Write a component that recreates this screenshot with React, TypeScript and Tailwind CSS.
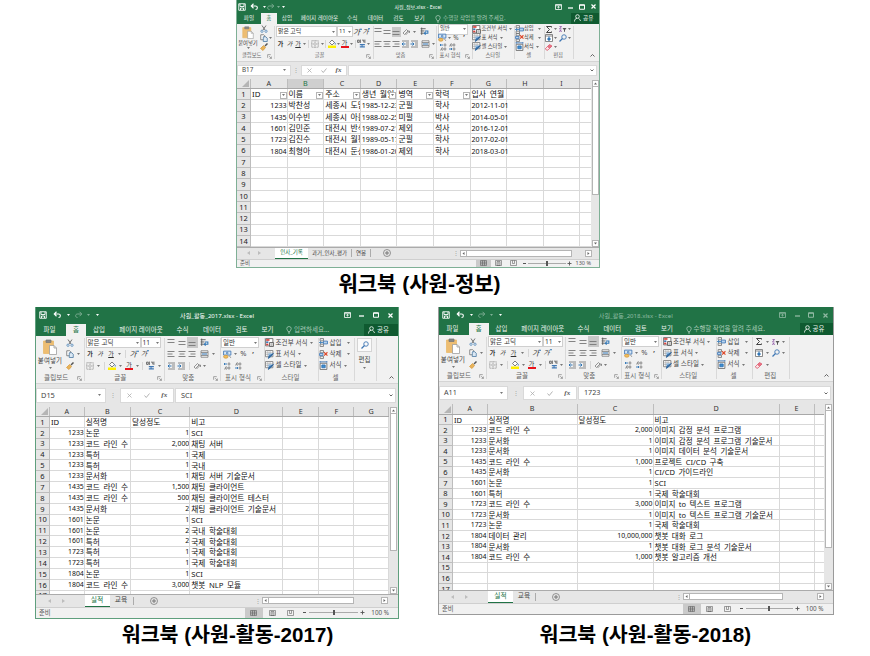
import React from 'react';
import clsx from 'clsx';

type Kids = { children?: React.ReactNode };

const KR = "font-['Noto_Sans','Noto_Sans_CJK_KR',sans-serif]";

/* ---------- small drawing helpers ---------- */

function Ico({ c = 'w-[9px] h-[9px]', v = '0 0 16 16', children }: Kids & { c?: string; v?: string }) {
  return (
    <svg className={clsx('block shrink-0', c)} viewBox={v} fill="none" stroke="currentColor" strokeWidth="1.5">
      {children}
    </svg>
  );
}

function Slot({ w, className, children }: Kids & { w: string; className?: string }) {
  return <div className={clsx('flex shrink-0 items-center justify-center', w, className)}>{children}</div>;
}

const Caret = ({ c = 'text-[#777]' }: { c?: string }) => (
  <Ico c={clsx('w-[3px] h-[2px]', c)} v="0 0 6 4"><path d="M0 0h6L3 4z" fill="currentColor" stroke="none" /></Ico>
);
const Save = () => <Ico c="w-[8px] h-[8px]"><path d="M1.5 1.5h13v13h-13zM4 2v5h8V2M5 14v-4h6v4" strokeWidth="1.8" /></Ico>;
const Undo = () => <Ico c="w-[9px] h-[8px]"><path d="M2 6h8c5 0 5 7 0 7M6 1.500L1.500 6 6 10.500" strokeWidth="2.200" /></Ico>;
const Redo = () => <Ico c="w-[9px] h-[8px] opacity-40"><path d="M14 6H6c-5 0-5 7 0 7M10 1.500L14.500 6 10 10.500" strokeWidth="2" /></Ico>;
const Bulb = () => <Ico c="w-[6px] h-[8px]" v="0 0 12 16"><path d="M4 11C4 9 1.500 8 1.500 5.500a4.500 4.500 0 019 0C10.500 8 8 9 8 11zM4 13.500h4M5 15.500h2" /></Ico>;
const Person = () => <Ico c="w-[7px] h-[8px]" v="0 0 14 16"><circle cx="7" cy="5" r="3.600" strokeWidth="1.800" /><path d="M1 15c0-4 2-6 5-6.500M9 9c2 1 3 2 4 5" strokeWidth="1.800" /></Ico>;
const Scissors = () => (
  <Ico c="w-[8px] h-[8px]"><path d="M4 1l6 9M12 1L6 10" stroke="#666" strokeWidth="1.800" /><circle cx="4" cy="12.500" r="2.300" stroke="#4a83b8" /><circle cx="12" cy="12.500" r="2.300" stroke="#4a83b8" /></Ico>
);
const Copy = () => (
  <Ico c="w-[8px] h-[8px]"><path d="M1.500 1.500h6l2 2v8h-8z" fill="#fff" stroke="#666" /><path d="M6.500 5.500h5l3 3v6.500h-8z" fill="#dbe8f4" stroke="#41719c" /></Ico>
);
const Brush = () => (
  <Ico c="w-[8px] h-[8px]"><path d="M15 1L10 6" stroke="#555" strokeWidth="3" /><path d="M7 5l4 4-5 6-5-4z" fill="#e8b35b" stroke="#d79b3c" /></Ico>
);
const Paste = ({ c }: { c: string }) => (
  <Ico c={c} v="0 0 28 32">
    <path d="M1 4h20v25H1z" fill="#edbd72" stroke="#e8b867" />
    <path d="M6 2h10v5H6z" fill="#888" stroke="#777" />
    <path d="M13 13h9l5 5v13H13z" fill="#fff" stroke="#999" />
    <path d="M22 13v5h5" stroke="#999" />
  </Ico>
);
const Borders = () => (
  <Ico c="w-[8px] h-[8px]"><path d="M1.500 1.500h13v13h-13zM8 1v14M1 8h14" stroke="#888" strokeDasharray="2 1" strokeWidth="1.400" /></Ico>
);
const Bucket = () => (
  <Ico c="w-[8px] h-[9px]" v="0 0 16 18"><path d="M3 7l5-5 5 5-5 5z" fill="#fff" stroke="#555" /><path d="M13 7c2 2 2 3 1.500 4" stroke="#3f77b4" strokeWidth="2" /><path d="M0 13h16v5H0z" fill="#fff000" stroke="none" /></Ico>
);
const FontColor = () => (
  <div className="flex w-[8px] flex-col items-center">
    <span className="text-[6px] leading-[6px] text-[#333]">가</span>
    <div className="h-[2px] w-full bg-[#e8141c]" />
  </div>
);
const Phonetic = () => (
  <Ico c="w-[9px] h-[9px]"><path d="M1 2h3v4H1zM6 1v6M9 2h3v4M14 1v6" stroke="#555" /><path d="M5 10h9M5 14h9M9 9v6" stroke="#3f77b4" strokeWidth="1.800" /></Ico>
);
const Lines = ({ d = 'M1 7h14M1 13h14' }: { d?: string }) => (
  <Ico c="w-[8px] h-[8px]"><path d={d} stroke="#777" strokeWidth="1.800" /></Ico>
);
const L_TOP = 'M1 1h14M1 7h14';
const L_MID = 'M1 5h14M1 11h14';
const L_LEFT = 'M1 3h14M1 8h10M1 13h14';
const L_CEN = 'M1 3h14M3 8h10M1 13h14';
const L_RIGHT = 'M1 3h14M5 8h10M1 13h14';
const Indent = ({ out = false }: { out?: boolean }) => (
  <Ico c="w-[9px] h-[8px]"><path d="M1 2h14M9 6h6M9 10h6M1 14h14" stroke="#666" />
    <path d={out ? 'M8 8H1M4 5L1 8l3 3' : 'M0 8h7M4 5l3 3-3 3'} stroke="#2f75b5" strokeWidth="2" /></Ico>
);
const Angle = () => <Ico c="w-[9px] h-[8px]"><path d="M1 10l7-7 3 3-7 7zM6 14l8-8M14 6v4M14 6h-4" stroke="#777" /></Ico>;
const Wrap = () => <Ico c="w-[9px] h-[9px]"><path d="M1 3h9M1 7h7M1 11h6M3 1v13" stroke="#555" /><path d="M9 7h5v4H8M10 8.500L7.500 11l2.500 2.500" stroke="#2f75b5" strokeWidth="1.800" /></Ico>;
const Merge = () => <Ico c="w-[9px] h-[8px]"><path d="M1 1.500h14v13H1zM1 5h14M1 11h14" stroke="#777" /><path d="M3 8h10" stroke="#2f75b5" strokeWidth="2" /></Ico>;
const Money = () => (
  <Ico c="w-[9px] h-[9px]"><path d="M1 2h13v7H1z" fill="#d6e6f5" stroke="#3f77b4" /><circle cx="7.500" cy="5.500" r="1.500" stroke="#3f77b4" /><ellipse cx="5" cy="12" rx="4" ry="2.500" fill="#f0c064" stroke="#d79b3c" /><path d="M11 10l3 4" stroke="#888" /></Ico>
);
const Decimal = ({ up = false }: { up?: boolean }) => (
  <Ico c="w-[8px] h-[8px]">
    <ellipse cx="12" cy="4" rx="1.800" ry="2.600" stroke="#666" strokeWidth="1.300" />
    <ellipse cx="12" cy="12" rx="1.800" ry="2.600" stroke="#666" strokeWidth="1.300" />
    <ellipse cx="6.500" cy={up ? 12 : 4} rx="1.800" ry="2.600" stroke="#666" strokeWidth="1.300" />
    <path d={up ? 'M8 4H2M4 2L2 4l2 2' : 'M2 12h6M6 10l2 2-2 2'} stroke="#2f75b5" strokeWidth="1.800" />
    <path d={up ? 'M2 14h1.500' : 'M2 6h1.500'} stroke="#666" />
  </Ico>
);
const Cond = () => (
  <Ico c="w-[9px] h-[9px]"><path d="M1 1h13v13H1z" fill="#fff" stroke="#666" /><path d="M2 2h6v3H2z" fill="#d8413b" stroke="none" /><path d="M2 6h4v3H2z" fill="#3f77b4" stroke="none" /><path d="M2 10h4v3H2z" fill="#d8413b" stroke="none" /><path d="M8 8h7v7H8z" fill="#fff" stroke="#555" /><path d="M9.500 10.500h4M9.500 12.700h4" stroke="#555" strokeWidth="1" /></Ico>
);
const TableFmt = () => (
  <Ico c="w-[9px] h-[9px]"><path d="M1 1h13v11H1z" fill="#fff" stroke="#777" /><path d="M2 5h12M2 8h12M5 1v11M9 1v11" stroke="#999" strokeWidth="1" /><path d="M6 6h7v5H6z" fill="#8db8e0" stroke="none" /><path d="M15 6l-5 6-4 3 1-4z" fill="#2f75b5" stroke="#2f6399" /></Ico>
);
const InsertI = () => (
  <Ico c="w-[9px] h-[9px]"><path d="M2 1h6v4H2zM2 11h6v4H2z" stroke="#777" /><path d="M8 5.500h7v5H8z" fill="#b9d4ee" stroke="#3f77b4" /><path d="M7 8H1M3.500 5.500L1 8l2.500 2.500" stroke="#2f75b5" /></Ico>
);
const DeleteI = () => (
  <Ico c="w-[9px] h-[9px]"><path d="M2 1h6v4H2zM2 11h6v4H2z" stroke="#777" /><path d="M1 6h6v4H1z" fill="#b9d4ee" stroke="#3f77b4" /><path d="M9 4l6 6M15 4l-6 6" stroke="#dd4a2c" strokeWidth="2" /></Ico>
);
const FormatI = () => (
  <Ico c="w-[9px] h-[9px]"><path d="M2 4h12v11H2z" fill="#fff" stroke="#666" /><path d="M5 7h6v5H5z" fill="#3f8fd2" stroke="#2f6fae" /><path d="M2 1.500h12M2 0v3M14 0v3" stroke="#3f77b4" /></Ico>
);
const Sigma = () => <Ico c="w-[8px] h-[9px]"><path d="M13 4V2H3l6 6-6 6h10v-2" stroke="#444" strokeWidth="2" /></Ico>;
const Sort = () => <Ico c="w-[8px] h-[8px]"><path d="M1 3h4L1 8h4M1 14l2-4 2 4" stroke="#8a4fa3" strokeWidth="1.600" /><path d="M7 6h8l-3 4v4l-2-1v-3z" fill="#555" stroke="none" /></Ico>;
const FillI = () => <Ico c="w-[8px] h-[8px]"><path d="M1 1h14v14H1zM1 4h14" fill="#fff" stroke="#666" /><path d="M8 5v7M5 9l3 3.500L11 9" stroke="#2f75b5" strokeWidth="2.400" /></Ico>;
const Find = ({ c = 'w-[8px] h-[8px]' }: { c?: string }) => <Ico c={c}><circle cx="10" cy="6" r="4.500" stroke="#3f77b4" strokeWidth="1.800" /><path d="M7 9l-6 6" stroke="#3f77b4" strokeWidth="2.400" /></Ico>;
const Eraser = () => <Ico c="w-[8px] h-[8px]"><path d="M1 11l8-8 5 3-8 8H3z" fill="#ea7183" stroke="#d9566b" /><path d="M1 11l4-4 4 4-3 3H3z" fill="#fbe3e6" stroke="#d9566b" strokeWidth="1" /></Ico>;
const Launcher = () => <Ico c="w-[5px] h-[5px]" v="0 0 8 8"><path d="M1 6V1h5M3.500 3.500L7 7M7 4v3H4" stroke="#777" strokeWidth="1" /></Ico>;
const Rule = ({ c }: { c: string }) => <div className={clsx('w-px shrink-0 bg-[#d6d6d6]', c)} />;

function Glyph({ k }: { k: 'plain' | 'it' | 'un' | 'big' | 'small' }) {
  return (
    <div className="flex items-start">
      <span
        className={clsx(
          'block leading-[8px] text-[#333]',
          k === 'plain' && 'font-bold',
          (k === 'it' || k === 'big' || k === 'small') && 'italic',
          k === 'un' && 'underline',
          k === 'big' ? 'text-[7.500px]' : k === 'small' ? 'text-[6.500px]' : 'text-[6px]',
        )}
      >
        가
      </span>
      {k === 'big' && <Ico c="w-[2px] h-[2px] text-[#2f75b5]" v="0 0 4 4"><path d="M0 4l2-4 2 4z" fill="currentColor" stroke="none" /></Ico>}
      {k === 'small' && <Ico c="w-[2px] h-[2px] text-[#2f75b5]" v="0 0 4 4"><path d="M0 0l2 4 2-4z" fill="currentColor" stroke="none" /></Ico>}
    </div>
  );
}

/* ---------- ribbon ---------- */

function Group({ w, label, launcher, labelH, children }: Kids & { w: string; label: string; launcher?: boolean; labelH: string }) {
  return (
    <div className={clsx('flex h-full shrink-0 flex-col', w)}>
      <div className="flex min-h-0 flex-1">
        <div className="min-w-0 flex-1">{children}</div>
      </div>
      <div className={clsx('flex items-center', labelH)}>
        <span className="flex-1 text-center whitespace-nowrap text-[#666]">{label}</span>
        {launcher && <div className="w-[7px]"><Launcher /></div>}
      </div>
    </div>
  );
}

const Sep = () => <div className="my-[2px] -mr-px w-px shrink-0 bg-[#d9d9d9]" />;

function Combo({ w, children }: Kids & { w: string }) {
  return (
    <div className={clsx('flex h-[11px] shrink-0 items-center justify-between border border-[#cfcfcf] bg-white px-[1px] text-[#333]', w)}>
      <span className="whitespace-nowrap">{children}</span>
      <Caret />
    </div>
  );
}

function IconLabel({ h, iw, tw, icon, children }: Kids & { h: string; iw: string; tw?: string; icon: React.ReactNode }) {
  return (
    <div className={clsx('flex items-center', h)}>
      <Slot w={iw}>{icon}</Slot>
      <span className={clsx('whitespace-nowrap text-[#444]', tw)}>{children}</span>
      <div className="ml-[2px]"><Caret /></div>
    </div>
  );
}

type RibbonW = { h: string; clip: string; font: string; align: string; num: string; styles: string; cells: string; combo: string };

function TallRibbon({ w, editing }: { w: RibbonW; editing: 'button' | 'icons' }) {
  const row = 'flex h-[11.300px] items-center';
  return (
    <div className={clsx('flex bg-[#f1f1f1] text-[6.500px] leading-none tracking-[0.100px]', w.h)}>
      <Group w={w.clip} label="클립보드" launcher labelH="h-[10px]">
        <div className="flex pt-[1.300px]">
          <div className="flex w-[28px] flex-col items-center pt-[2px]">
            <Paste c="w-[14px] h-[16px]" />
            <span className="mt-[3px] whitespace-nowrap text-[#444]">붙여넣기</span>
            <div className="mt-[2px]"><Caret /></div>
          </div>
          <div>
            <div className={row}><Slot w="w-[11px]"><Scissors /></Slot></div>
            <div className={row}><Slot w="w-[11px]"><Copy /></Slot><Slot w="w-[7px]"><Caret /></Slot></div>
            <div className={row}><Slot w="w-[11px]"><Brush /></Slot></div>
          </div>
        </div>
      </Group>
      <Sep />
      <Group w={w.font} label="글꼴" launcher labelH="h-[10px]">
        <div className="pt-[1.300px] pl-[2px]">
          <div className={row}><Combo w="w-[55px]">맑은 고딕</Combo><Combo w="w-[20px]">11</Combo></div>
          <div className={row}>
            <Slot w="w-[9px]"><Glyph k="plain" /></Slot><Slot w="w-[11px]"><Glyph k="it" /></Slot><Slot w="w-[11px]"><Glyph k="un" /></Slot>
            <Slot w="w-[6px]"><Caret /></Slot><Slot w="w-[6px]"><Rule c="h-[8px]" /></Slot>
            <Slot w="w-[11px]"><Glyph k="big" /></Slot><Slot w="w-[11px]"><Glyph k="small" /></Slot>
          </div>
          <div className={row}>
            <Slot w="w-[9px]"><Borders /></Slot><Slot w="w-[8px]"><Caret /></Slot><Slot w="w-[4px]"><Rule c="h-[8px]" /></Slot>
            <Slot w="w-[11px]"><Bucket /></Slot><Slot w="w-[6px]"><Caret /></Slot>
            <Slot w="w-[11px]"><FontColor /></Slot><Slot w="w-[6px]"><Caret /></Slot><Slot w="w-[4px]"><Rule c="h-[8px]" /></Slot>
            <Slot w="w-[12px]"><Phonetic /></Slot><Slot w="w-[5px]"><Caret /></Slot>
          </div>
        </div>
      </Group>
      <Sep />
      <Group w={w.align} label="맞춤" launcher labelH="h-[10px]">
        <div className="pt-[1.300px] pl-[2px]">
          <div className={row}>
            <Slot w="w-[10.500px]"><Lines d={L_TOP} /></Slot><Slot w="w-[10.500px]"><Lines d={L_MID} /></Slot>
            <Slot w="w-[10.500px]" className="h-[11px] bg-[#c8c8c8]"><Lines /></Slot><Slot w="w-[13px]"><Wrap /></Slot>
          </div>
          <div className={row}>
            <Slot w="w-[10.500px]"><Lines d={L_LEFT} /></Slot><Slot w="w-[10.500px]"><Lines d={L_CEN} /></Slot>
            <Slot w="w-[10.500px]"><Lines d={L_RIGHT} /></Slot><Slot w="w-[13px]"><Merge /></Slot><Slot w="w-[5px]"><Caret /></Slot>
          </div>
          <div className={row}>
            <Slot w="w-[10.500px]"><Indent out /></Slot><Slot w="w-[10.500px]"><Indent /></Slot><Slot w="w-[5px]"><Rule c="h-[8px]" /></Slot>
            <Slot w="w-[10px]"><Angle /></Slot><Slot w="w-[5px]"><Caret /></Slot>
          </div>
        </div>
      </Group>
      <Sep />
      <Group w={w.num} label="표시 형식" launcher labelH="h-[10px]">
        <div className="pt-[1.300px] pl-[1.500px]">
          <div className={row}><Combo w={w.combo}>일반</Combo></div>
          <div className={row}>
            <Slot w="w-[12px]"><Money /></Slot><Slot w="w-[5px]"><Caret /></Slot>
            <Slot w="w-[11px]"><span className="text-[7.500px] text-[#555]">%</span></Slot><Slot w="w-[8px]"><b className="text-[7px] text-[#444]">’</b></Slot>
          </div>
          <div className={row}><Slot w="w-[11px]"><Decimal up /></Slot><Slot w="w-[12px]"><Decimal /></Slot></div>
        </div>
      </Group>
      <Sep />
      <Group w={w.styles} label="스타일" labelH="h-[10px]">
        <div className="pt-[1.300px]">
          <IconLabel h="h-[11.300px]" iw="w-[12px]" icon={<Cond />}>조건부 서식</IconLabel>
          <IconLabel h="h-[11.300px]" iw="w-[12px]" icon={<TableFmt />}>표 서식</IconLabel>
          <IconLabel h="h-[11.300px]" iw="w-[12px]" icon={<TableFmt />}>셀 스타일</IconLabel>
        </div>
      </Group>
      <Sep />
      <Group w={w.cells} label="셀" labelH="h-[10px]">
        <div className="pt-[1.300px]">
          <IconLabel h="h-[11.300px]" iw="w-[12px]" tw="w-[15px]" icon={<InsertI />}>삽입</IconLabel>
          <IconLabel h="h-[11.300px]" iw="w-[12px]" tw="w-[15px]" icon={<DeleteI />}>삭제</IconLabel>
          <IconLabel h="h-[11.300px]" iw="w-[12px]" tw="w-[12px]" icon={<FormatI />}>서식</IconLabel>
        </div>
      </Group>
      <Sep />
      {editing === 'button' ? (
        <div className="flex w-[22px] shrink-0 flex-col items-center pt-[2px]">
          <div className="flex h-[14px] w-[15px] items-center justify-center border border-[#d4d4d4] bg-[#fafafa]"><Find /></div>
          <span className="mt-[5px] text-[#444]">편집</span>
          <div className="mt-[3px]"><Caret /></div>
        </div>
      ) : (
        <Group w="w-[37.500px]" label="편집" labelH="h-[10px]">
          <div className="pt-[1.300px] pl-[3px]">
            <div className={row}><Slot w="w-[9px]"><Sigma /></Slot><Slot w="w-[7px]"><Caret /></Slot><Slot w="w-[10px]"><Sort /></Slot><Slot w="w-[5px]"><Caret /></Slot></div>
            <div className={row}><Slot w="w-[9px]"><FillI /></Slot><Slot w="w-[7px]"><Caret /></Slot><Slot w="w-[10px]"><Find /></Slot><Slot w="w-[5px]"><Caret /></Slot></div>
            <div className={row}><Slot w="w-[9px]"><Eraser /></Slot><Slot w="w-[7px]"><Caret /></Slot></div>
          </div>
        </Group>
      )}
      <Sep />
      <Collapse />
    </div>
  );
}

const Collapse = () => (
  <div className="flex flex-1 items-end justify-end pr-[4px] pb-[4px]">
    <Ico c="w-[5px] h-[3px] text-[#555]" v="0 0 10 6"><path d="M1 5l4-4 4 4" strokeWidth="1.800" /></Ico>
  </div>
);

function ShortRibbon() {
  const row = 'flex h-[8.800px] items-center';
  const big = 'flex h-[12.200px] items-center';
  const lh = 'h-[9px]';
  return (
    <div className="flex h-[37px] bg-[#f1f1f1] text-[5.300px] leading-none">
      <Group w="w-[36.500px]" label="클립보드" launcher labelH={lh}>
        <div className="flex pt-[1.200px]">
          <div className="flex w-[22px] flex-col items-center pt-[1px]">
            <Paste c="w-[12px] h-[13px]" />
            <span className="mt-[2px] whitespace-nowrap text-[#444]">붙여넣기</span>
            <div className="mt-[1px]"><Caret /></div>
          </div>
          <div>
            <div className={row}><Slot w="w-[9px]"><Scissors /></Slot></div>
            <div className={row}><Slot w="w-[9px]"><Copy /></Slot><Slot w="w-[5px]"><Caret /></Slot></div>
            <div className={row}><Slot w="w-[9px]"><Brush /></Slot></div>
          </div>
        </div>
      </Group>
      <Sep />
      <Group w="w-[99px]" label="글꼴" launcher labelH={lh}>
        <div className="pt-[2px] pl-[2.500px]">
          <div className={clsx(big, 'text-[5.900px]')}>
            <Combo w="w-[61px]">맑은 고딕</Combo><Combo w="w-[16px]">11</Combo>
            <Slot w="w-[9px]"><Glyph k="big" /></Slot><Slot w="w-[9px]"><Glyph k="small" /></Slot>
          </div>
          <div className={big}>
            <Slot w="w-[9px]"><Glyph k="plain" /></Slot><Slot w="w-[9px]"><Glyph k="it" /></Slot><Slot w="w-[8px]"><Glyph k="un" /></Slot>
            <Slot w="w-[5px]"><Caret /></Slot><Slot w="w-[3px]"><Rule c="h-[8px]" /></Slot>
            <Slot w="w-[10px]"><Borders /></Slot><Slot w="w-[4px]"><Caret /></Slot><Slot w="w-[3px]"><Rule c="h-[8px]" /></Slot>
            <Slot w="w-[9px]"><Bucket /></Slot><Slot w="w-[4px]"><Caret /></Slot>
            <Slot w="w-[9px]"><FontColor /></Slot><Slot w="w-[4px]"><Caret /></Slot><Slot w="w-[4px]"><Rule c="h-[8px]" /></Slot>
            <Slot w="w-[9px]"><Phonetic /></Slot><Slot w="w-[4px]"><Caret /></Slot>
          </div>
        </div>
      </Group>
      <Sep />
      <Group w="w-[63px]" label="맞춤" launcher labelH={lh}>
        <div className="pt-[2px] pl-[1px]">
          <div className={big}>
            <Slot w="w-[9px]"><Lines d={L_TOP} /></Slot><Slot w="w-[9px]"><Lines d={L_MID} /></Slot>
            <Slot w="w-[9px]" className="h-[10px] bg-[#c8c8c8]"><Lines /></Slot>
            <Slot w="w-[11px]"><Angle /></Slot><Slot w="w-[5px]"><Caret /></Slot><Slot w="w-[16px]"><Wrap /></Slot>
          </div>
          <div className={big}>
            <Slot w="w-[9px]"><Lines d={L_LEFT} /></Slot><Slot w="w-[9px]"><Lines d={L_CEN} /></Slot><Slot w="w-[9px]"><Lines d={L_RIGHT} /></Slot>
            <Slot w="w-[9px]"><Indent out /></Slot><Slot w="w-[9px]"><Indent /></Slot><Slot w="w-[13px]"><Merge /></Slot><Slot w="w-[4px]"><Caret /></Slot>
          </div>
        </div>
      </Group>
      <Sep />
      <Group w="w-[36px]" label="표시 형식" launcher labelH={lh}>
        <div className="pt-[1.200px] pl-[2.500px]">
          <div className={row}><Combo w="w-[30px]">일반</Combo></div>
          <div className={row}>
            <Slot w="w-[9px]"><Money /></Slot><Slot w="w-[5px]"><Caret /></Slot>
            <Slot w="w-[8px]"><span className="text-[6.500px] text-[#555]">%</span></Slot><Slot w="w-[8px]"><b className="text-[7px] text-[#444]">’</b></Slot>
          </div>
          <div className={row}><Slot w="w-[9px]"><Decimal up /></Slot><Slot w="w-[9px]"><Decimal /></Slot></div>
        </div>
      </Group>
      <Sep />
      <Group w="w-[42.500px]" label="스타일" labelH={lh}>
        <div className="pt-[1.200px]">
          <IconLabel h="h-[8.800px]" iw="w-[10px]" icon={<Cond />}>조건부 서식</IconLabel>
          <IconLabel h="h-[8.800px]" iw="w-[10px]" icon={<TableFmt />}>표 서식</IconLabel>
          <IconLabel h="h-[8.800px]" iw="w-[10px]" icon={<TableFmt />}>셀 스타일</IconLabel>
        </div>
      </Group>
      <Sep />
      <Group w="w-[29.500px]" label="셀" labelH={lh}>
        <div className="pt-[1.200px]">
          <IconLabel h="h-[8.800px]" iw="w-[10px]" tw="w-[12px]" icon={<InsertI />}>삽입</IconLabel>
          <IconLabel h="h-[8.800px]" iw="w-[10px]" tw="w-[12px]" icon={<DeleteI />}>삭제</IconLabel>
          <IconLabel h="h-[8.800px]" iw="w-[10px]" tw="w-[10px]" icon={<FormatI />}>서식</IconLabel>
        </div>
      </Group>
      <Sep />
      <Group w="w-[29px]" label="편집" labelH={lh}>
        <div className="pt-[1.200px] pl-[1px]">
          <div className={row}><Slot w="w-[8px]"><Sigma /></Slot><Slot w="w-[6px]"><Caret /></Slot><Slot w="w-[8px]"><Sort /></Slot><Slot w="w-[5px]"><Caret /></Slot></div>
          <div className={row}><Slot w="w-[8px]"><FillI /></Slot><Slot w="w-[6px]"><Caret /></Slot><Slot w="w-[8px]"><Find /></Slot><Slot w="w-[5px]"><Caret /></Slot></div>
          <div className={row}><Slot w="w-[8px]"><Eraser /></Slot><Slot w="w-[5px]"><Caret /></Slot></div>
        </div>
      </Group>
      <Sep />
      <Collapse />
    </div>
  );
}

/* ---------- window frame parts ---------- */

type TitleCfg = { h: string; qat: string[]; title: string; titleCls: string; btn: string; faded?: boolean };

function TitleBar({ t }: { t: TitleCfg }) {
  return (
    <div className={clsx('flex shrink-0 items-center justify-between bg-[#217346] text-white', t.h)}>
      <div className="flex flex-1 items-center">
        <Slot w={t.qat[0]}><Save /></Slot>
        <Slot w={t.qat[1]}><Undo /></Slot>
        <Slot w={t.qat[2]}><Caret c="text-white" /></Slot>
        <Slot w={t.qat[3]}><Redo /></Slot>
        <Slot w={t.qat[4]}><Caret c="text-[#7fb096]" /></Slot>
        <Slot w={t.qat[5]}><Caret c="text-white" /></Slot>
      </div>
      <span className={clsx('leading-none whitespace-nowrap', t.titleCls)}>{t.title}</span>
      <div className={clsx('flex flex-1 items-center justify-end', t.faded && 'opacity-50')}>
        <Slot w={t.btn}><Ico c="w-[7px] h-[6px]" v="0 0 14 12"><path d="M1 1h12v10H1zM1 3.500h12M7 9V5M5 7l2-2 2 2" strokeWidth="1.600" /></Ico></Slot>
        <Slot w={t.btn}><Ico c="w-[5px] h-[6px]" v="0 0 10 12"><path d="M0 8h10" strokeWidth="2.600" /></Ico></Slot>
        <Slot w={t.btn}><Ico c="w-[6px] h-[6px]" v="0 0 12 12"><path d="M1 1.500h10v9H1zM1 2.500h10" strokeWidth="2" /></Ico></Slot>
        <Slot w={t.btn}><Ico c="w-[5px] h-[5px]" v="0 0 10 10"><path d="M1 1l8 8M9 1L1 9" strokeWidth="2.400" /></Ico></Slot>
      </div>
    </div>
  );
}

const TAB_NAMES = ['파일', '홈', '삽입', '페이지 레이아웃', '수식', '데이터', '검토', '보기'];

function RibbonTabs({ h, widths, text, tell, share }: { h: string; widths: string[]; text: string; tell: string; share: string }) {
  return (
    <div className={clsx('flex shrink-0 items-stretch bg-[#217346] leading-none text-[#e9f2ec]', h, text)}>
      {TAB_NAMES.map((n, i) => (
        <div key={n} className={clsx('flex shrink-0 items-center justify-center pt-px whitespace-nowrap', widths[i], i === 1 && 'bg-[#f1f1f1] text-[#217346]')}>{n}</div>
      ))}
      <div className="flex flex-1 items-center gap-[2px] pt-px pl-[5px] text-[#a9cbb8]">
        <Bulb />
        <span className="whitespace-nowrap">{tell}</span>
      </div>
      <div className={clsx('flex shrink-0 items-center gap-[2px] bg-[#0f5a30]', share)}>
        <Person /><span className="pt-px whitespace-nowrap">공유</span>
      </div>
    </div>
  );
}

function FormulaBar({ h, bh, cell, value, name, dots, mid, text }: { h: string; bh: string; cell: string; value: string; name: string; dots: string; mid: string; text: string }) {
  return (
    <div className={clsx('flex shrink-0 items-center border-t border-[#d4d4d4] bg-[#e6e6e6] pr-[2px] leading-none text-[#444]', h, text)}>
      <div className={clsx('flex shrink-0 items-center justify-between border border-[#d9d9d9] bg-white pr-[4px] pl-[4px]', bh, name)}>
        <span>{cell}</span><Caret />
      </div>
      <Slot w={dots}><span className="text-[6px] text-[#999]">⋮</span></Slot>
      <div className={clsx('flex shrink-0 items-center justify-around border border-[#d9d9d9] bg-white', bh, mid)}>
        <Ico c="w-[5px] h-[5px] text-[#aaa]" v="0 0 10 10"><path d="M1 1l8 8M9 1L1 9" /></Ico>
        <Ico c="w-[6px] h-[5px] text-[#aaa]" v="0 0 12 10"><path d="M1 5l3.500 4L11 1" strokeWidth="1.800" /></Ico>
        <i className="font-['Liberation_Serif',serif] text-[7px] font-bold text-[#555]">fx</i>
      </div>
      <div className={clsx('ml-px flex min-w-0 flex-1 items-center justify-between border border-[#d9d9d9] bg-white pr-[2px] pl-[5px]', bh)}>
        <span>{value}</span>
        <Ico c="w-[4px] h-[3px] text-[#555]" v="0 0 8 6"><path d="M1 1l3 3 3-3" strokeWidth="1.800" /></Ico>
      </div>
    </div>
  );
}

type Col = { n: string; w: string; num?: boolean; filter?: boolean; sel?: boolean; spill?: boolean };
type Sheet = {
  h: string;
  headH: string;
  rowH: string;
  head: string;
  cols: Col[];
  rows: string[][];
  count: number;
  numText: string;
  text: string;
  gutter: string;
  bar: string;
  thumb: string;
};

const ScrollBtn = ({ d, c = 'w-[7px] h-[7px]' }: { d: string; c?: string }) => (
  <div className={clsx('flex shrink-0 items-center justify-center border border-[#b5b5b5] bg-white', c)}>
    <Ico c="w-[3px] h-[3px] text-[#666]" v="0 0 6 6"><path d={d} fill="currentColor" stroke="none" /></Ico>
  </div>
);

function Cell({ c, v, first, numText }: { c: Col; v: string; first: boolean; numText: string }) {
  const numeric = /^[\d,-]+$/.test(v);
  return (
    <div
      className={clsx(
        'flex shrink-0 items-center border-r border-b border-[#d9d9d9] whitespace-nowrap',
        c.w,
        c.spill ? 'overflow-visible' : 'overflow-hidden',
        c.num && !first ? 'justify-end' : 'pl-px',
        numeric ? clsx('pt-px', numText) : 'pt-[2px]',
      )}
    >
      <span className={clsx(c.filter && first && 'min-w-0 flex-1')}>{v}</span>
      {c.filter && first && (
        <div className="z-10 flex h-[7px] w-[7px] shrink-0 items-center justify-center border border-[#b5b5b5] bg-white"><Caret /></div>
      )}
    </div>
  );
}

function Grid({ s }: { s: Sheet }) {
  return (
    <div className={clsx('flex shrink-0 overflow-hidden bg-white', s.h)}>
      <div className="flex min-w-0 flex-1 flex-col overflow-hidden">
        <div className={clsx('flex shrink-0 border-b border-[#a8a8a8] bg-[#e6e6e6] text-[7.200px] leading-none text-[#333]', s.headH)}>
          <div className={clsx('flex shrink-0 items-end justify-end border-r border-[#bdbdbd] p-[1px]', s.head)}>
            <Ico c="w-[7px] h-[7px] text-[#b5b5b5]" v="0 0 10 10"><path d="M10 0v10H0z" fill="currentColor" stroke="none" /></Ico>
          </div>
          {s.cols.map((c) => (
            <div key={c.n} className={clsx('flex shrink-0 items-center justify-center border-r border-[#bdbdbd]', c.w, c.sel && 'bg-[#cfcfcf] text-[#217346]')}>{c.n}</div>
          ))}
        </div>
        {Array.from({ length: s.count }, (_, r) => (
          <div key={r} className={clsx('flex shrink-0 leading-none text-[#111]', s.rowH, s.text)}>
            <div className={clsx('flex shrink-0 items-center justify-center border-r border-b border-[#bdbdbd] bg-[#e6e6e6] pt-px text-[7.500px] text-[#222]', s.head)}>{r + 1}</div>
            {s.cols.map((c, i) => <Cell key={c.n} c={c} v={s.rows[r]?.[i] ?? ''} first={r === 0} numText={s.numText} />)}
            <div className="flex-1 border-b border-[#d9d9d9]" />
          </div>
        ))}
      </div>
      <div className={clsx('flex shrink-0 flex-col items-center bg-[#e6e6e6]', s.gutter, s.bar)}>
        <ScrollBtn d="M3 1l3 4H0z" />
        <div className={clsx('w-[7px] shrink-0 border border-t-0 border-[#b5b5b5] bg-white', s.thumb)} />
        <div className="flex-1" />
        <ScrollBtn d="M3 5L0 1h6z" />
      </div>
    </div>
  );
}

type FootCfg = {
  h: string; nav: string; lead: string; active: string; activeW: string; others: string[]; otherW: string[]; plus: string;
  scroll: string; thumb: string; text: string;
  sh: string; zoom: string; viewW: string; slider: string; pct: string; tail: string;
};

function Footer({ f }: { f: FootCfg }) {
  return (
    <>
      <div className={clsx('flex shrink-0 items-center border-t border-[#ababab] bg-[#e6e6e6] leading-none text-[#444]', f.h, f.text)}>
        <div className={clsx('flex shrink-0 items-center text-[#bdbdbd]', f.lead)}>
          <Ico c="w-[3px] h-[4px]" v="0 0 6 8"><path d="M6 0v8L0 4z" fill="currentColor" stroke="none" /></Ico>
          <div className={f.nav} />
          <Ico c="w-[3px] h-[4px]" v="0 0 6 8"><path d="M0 0v8l6-4z" fill="currentColor" stroke="none" /></Ico>
        </div>
        <div className={clsx('flex h-full shrink-0 items-center justify-center border-b-[1.500px] border-[#217346] bg-white whitespace-nowrap text-[#217346]', f.activeW)}>{f.active}</div>
        {f.others.map((o, i) => (
          <div key={o} className={clsx('flex h-[8px] shrink-0 items-center justify-center border-r border-[#ababab] whitespace-nowrap', f.otherW[i])}>{o}</div>
        ))}
        <Slot w={f.plus}><Ico c="w-[8px] h-[8px] text-[#777]"><circle cx="8" cy="8" r="7" /><path d="M8 4v8M4 8h8" strokeWidth="2" /></Ico></Slot>
        <div className="flex-1" />
        <Slot w="w-[8px]"><span className="text-[6px] text-[#999]">⋮</span></Slot>
        <div className={clsx('flex h-[7px] shrink-0 items-center', f.scroll)}>
          <ScrollBtn d="M1 3l4-3v6z" />
          <div className={clsx('h-[7px] border border-l-0 border-[#b5b5b5] bg-white', f.thumb)} />
          <div className="flex-1" />
          <ScrollBtn d="M5 3L1 0v6z" />
        </div>
      </div>
      <div className={clsx('flex min-h-0 flex-1 items-center border-t border-[#cfcfcf] bg-[#f1f1f1] pl-[3px] leading-none text-[#555]', f.sh)}>
        <span className="flex-1">준비</span>
        <Slot w={f.viewW} className="h-full bg-[#cacaca]"><Ico c="w-[7px] h-[6px]" v="0 0 14 12"><path d="M1 1h12v10H1zM1 4.300h12M1 7.700h12M5 1v10M9 1v10" strokeWidth="1.100" /></Ico></Slot>
        <Slot w={f.viewW}><Ico c="w-[7px] h-[6px]" v="0 0 14 12"><path d="M1 1h12v10H1zM4 3h6v8H4zM5 5.500h4M5 8h4" strokeWidth="1.100" /></Ico></Slot>
        <Slot w={f.viewW}><Ico c="w-[7px] h-[6px]" v="0 0 14 12"><path d="M1 1h12v10H1zM5 1v6M9 1v6M5 7h4" strokeWidth="1.100" /></Ico></Slot>
        <Slot w={f.zoom}><div className="h-px w-[3px] bg-[#555]" /></Slot>
        <div className={clsx('flex shrink-0 items-center', f.slider)}>
          <div className="h-px flex-1 bg-[#aaa]" /><div className="h-[5px] w-[2px] bg-[#555]" /><div className="h-px flex-1 bg-[#aaa]" />
        </div>
        <Slot w={f.zoom}><Ico c="w-[5px] h-[5px]" v="0 0 10 10"><path d="M5 1v8M1 5h8" strokeWidth="1.800" /></Ico></Slot>
        <span className={clsx('shrink-0 text-right whitespace-nowrap', f.tail)}>{f.pct}</span>
      </div>
    </>
  );
}

const Caption = ({ c, children }: Kids & { c: string }) => (
  <figcaption className={clsx("text-center font-['Liberation_Sans','Noto_Sans_CJK_KR',sans-serif] leading-[30px] font-bold whitespace-nowrap text-black", c)}>{children}</figcaption>
);

/* ---------- workbook data ---------- */

const infoSheet: Sheet = {
  h: 'h-[168px]', headH: 'h-[10px]', rowH: 'h-[11.310px]', head: 'w-[14px]', count: 14, gutter: 'w-[8px]', bar: 'pt-[1px]', thumb: 'h-[108px]',
  numText: 'text-[7.100px]', text: 'text-[7.900px] [word-spacing:1.500px]',
  cols: [
    { n: 'A', w: 'w-[36.600px]', num: true, filter: true }, { n: 'B', w: 'w-[36.600px]', filter: true, sel: true },
    { n: 'C', w: 'w-[36.600px]', filter: true }, { n: 'D', w: 'w-[36.600px]', filter: true }, { n: 'E', w: 'w-[36.600px]', filter: true },
    { n: 'F', w: 'w-[36.600px]', filter: true }, { n: 'G', w: 'w-[36.600px]', spill: true }, { n: 'H', w: 'w-[36.600px]' }, { n: 'I', w: 'w-[36.600px]' },
  ],
  rows: [
    ['ID', '이름', '주소', '생년 월일', '병역', '학력', '입사 연월'],
    ['1233', '박찬성', '세종시 도담동', '1985-12-23', '군필', '학사', '2012-11-01'],
    ['1435', '이수빈', '세종시 아름동', '1988-02-25', '미필', '박사', '2014-05-01'],
    ['1601', '김민준', '대전시 반석동', '1989-07-21', '제외', '석사', '2016-12-01'],
    ['1723', '김진수', '대전시 월평동', '1989-05-17', '군필', '학사', '2017-02-01'],
    ['1804', '최형아', '대전시 둔산동', '1986-01-20', '제외', '학사', '2018-03-01'],
  ],
};

const sheet2017: Sheet = {
  h: 'h-[187px]', headH: 'h-[10.500px]', rowH: 'h-[10.870px]', head: 'w-[14px]', count: 17, gutter: 'w-[9px]', bar: '', thumb: 'h-[137px]',
  numText: 'text-[6.900px]', text: 'text-[7.700px] [word-spacing:1.500px]',
  cols: [
    { n: 'A', w: 'w-[34.800px]', num: true }, { n: 'B', w: 'w-[46.200px]' }, { n: 'C', w: 'w-[59.300px]', num: true },
    { n: 'D', w: 'w-[93px]' }, { n: 'E', w: 'w-[36px]' }, { n: 'F', w: 'w-[35px]' }, { n: 'G', w: 'w-[34.700px]' },
  ],
  rows: [
    ['ID', '실적명', '달성정도', '비고'],
    ['1233', '논문', '1', 'SCI'],
    ['1233', '코드 라인 수', '2,000', '채팅 서버'],
    ['1233', '특허', '1', '국제'],
    ['1233', '특허', '1', '국내'],
    ['1233', '문서화', '1', '채팅 서버 기술문서'],
    ['1435', '코드 라인 수', '1,500', '채팅 클라이언트'],
    ['1435', '코드 라인 수', '500', '채팅 클라이언트 테스터'],
    ['1435', '문서화', '2', '채팅 클라이언트 기술문서'],
    ['1601', '논문', '1', 'SCI'],
    ['1601', '논문', '2', '국내 학술대회'],
    ['1601', '특허', '2', '국제 학술대회'],
    ['1723', '특허', '1', '국제 학술대회'],
    ['1723', '특허', '1', '국제 학술대회'],
    ['1804', '논문', '1', 'SCI'],
    ['1804', '코드 라인 수', '3,000', '챗봇 NLP 모듈'],
  ],
};

const sheet2018: Sheet = {
  h: 'h-[185.500px]', headH: 'h-[10.500px]', rowH: 'h-[10.600px]', head: 'w-[14px]', count: 17, gutter: 'w-[9px]', bar: '', thumb: 'h-[137px]',
  numText: 'text-[6.900px]', text: 'text-[7.550px] [word-spacing:1.500px]',
  cols: [
    { n: 'A', w: 'w-[34.500px]', num: true }, { n: 'B', w: 'w-[90px]' }, { n: 'C', w: 'w-[76px]', num: true },
    { n: 'D', w: 'w-[126px]' }, { n: 'E', w: 'w-[35px]' },
  ],
  rows: [
    ['ID', '실적명', '달성정도', '비고'],
    ['1233', '코드 라인 수', '2,000', '이미지 감정 분석 프로그램'],
    ['1233', '문서화', '1', '이미지 감정 분석 프로그램 기술문서'],
    ['1233', '문서화', '1', '이미지 데이터 분석 기술문서'],
    ['1435', '코드 라인 수', '1,000', '프로젝트 CI/CD 구축'],
    ['1435', '문서화', '1', 'CI/CD 가이드라인'],
    ['1601', '논문', '1', 'SCI'],
    ['1601', '특허', '1', '국제 학술대회'],
    ['1723', '코드 라인 수', '3,000', '이미지 to 텍스트 프로그램'],
    ['1723', '문서화', '1', '이미지 to 텍스트 프로그램 기술문서'],
    ['1723', '논문', '1', '국제 학술대회'],
    ['1804', '데이터 관리', '10,000,000', '챗봇 대화 로그'],
    ['1804', '문서화', '1', '챗봇 대화 로그 분석 기술문서'],
    ['1804', '코드 라인 수', '1,000', '챗봇 알고리즘 개선'],
  ],
};

export default function App() {
  return (
    <main className={clsx('h-[656px] w-[870px] overflow-hidden bg-white', KR)}>
      <figure className="ml-[236px] h-[307px] w-[364px]">
        <div className="flex h-[268px] flex-col overflow-hidden border border-t-0 border-[#7fb096]">
          <TitleBar t={{ h: 'h-[13px]', qat: ['w-[10px]', 'w-[15px]', 'w-[4px]', 'w-[9px]', 'w-[6px]', 'w-[4px]'], title: '사원_정보.xlsx - Excel', titleCls: 'text-[5px] pt-[2px]', btn: 'w-[11.500px]' }} />
          <RibbonTabs h="h-[10.500px]" text="text-[5.600px]" tell="수행할 작업을 알려 주세요." share="w-[28px] pl-[3px]"
            widths={['w-[24px]', 'w-[15.500px]', 'w-[21px]', 'w-[44px]', 'w-[21.500px]', 'w-[25px]', 'w-[21px]', 'w-[21px]']} />
          <ShortRibbon />
          <FormulaBar h="h-[18.500px]" bh="h-[11px]" text="text-[6.300px]" cell="B17" value="" name="w-[54px]" dots="w-[10px]" mid="w-[46px]" />
          <Grid s={infoSheet} />
          <Footer f={{ h: 'h-[11.500px]', lead: 'w-[38px] pl-[10px]', nav: 'w-[8px]', active: '인사_기록', activeW: 'w-[33px]', others: ['과거_인사_평가', '연봉'], otherW: ['w-[44px]', 'w-[19px]'], plus: 'w-[31px]', scroll: 'w-[132px] mr-[7px]', thumb: 'w-[105px]', text: 'text-[5.500px]', sh: 'text-[5.500px]', viewW: 'w-[15px]', zoom: 'w-[7px]', slider: 'w-[38px]', pct: '130 %', tail: 'w-[18px] mr-[8px]' }} />
        </div>
        <Caption c="pl-[3px] pt-[1px] text-[21px]">워크북 (사원-정보)</Caption>
      </figure>

      <div className="flex pl-[35px]">
        <figure className="w-[364px]">
          <div className="flex h-[312px] flex-col overflow-hidden border border-t-0 border-[#5f9f7d]">
            <TitleBar t={{ h: 'h-[16.500px]', qat: ['w-[13px]', 'w-[17px]', 'w-[5px]', 'w-[14px]', 'w-[6px]', 'w-[12px]'], title: '사원_활동_2017.xlsx - Excel', titleCls: 'text-[6.100px] pt-[2px]', btn: 'w-[14.500px]' }} />
            <RibbonTabs h="h-[12.500px]" text="text-[6.500px]" tell="입력하세요..." share="w-[34px] pl-[4px]"
              widths={['w-[30px] pr-[3px]', 'w-[20px]', 'w-[26px]', 'w-[58px]', 'w-[25px]', 'w-[34px]', 'w-[25px]', 'w-[27px]']} />
            <TallRibbon editing="button" w={{ h: 'h-[47px]', clip: 'w-[47.500px]', font: 'w-[80.500px]', align: 'w-[55.500px]', num: 'w-[44px]', styles: 'w-[54px]', cells: 'w-[36px]', combo: 'w-[38px]' }} />
            <FormulaBar h="h-[23.500px]" bh="h-[15px]" text="text-[7.400px]" cell="D15" value="SCI" name="w-[70px]" dots="w-[14px]" mid="w-[54px]" />
            <Grid s={sheet2017} />
            <Footer f={{ h: 'h-[13px]', lead: 'w-[48.500px] pl-[12px]', nav: 'w-[11px]', active: '실적', activeW: 'w-[25px]', others: ['교육'], otherW: ['w-[24px]'], plus: 'w-[41px]', scroll: 'w-[126px] mr-[10px]', thumb: 'w-[85px]', text: 'text-[6.800px]', sh: 'text-[6.300px]', viewW: 'w-[18.500px]', zoom: 'w-[9px]', slider: 'w-[49px]', pct: '100 %', tail: 'w-[22px] mr-[9px]' }} />
          </div>
          <Caption c="pl-[21px] pt-[1px] text-[20.600px]">워크북 (사원-활동-2017)</Caption>
        </figure>

        <figure className="ml-[39px] w-[395.500px]">
          <div className="flex h-[308px] flex-col overflow-hidden border border-t-0 border-[#9a9a9a]">
            <TitleBar t={{ h: 'h-[16px]', qat: ['w-[13px]', 'w-[17px]', 'w-[5px]', 'w-[14px]', 'w-[6px]', 'w-[12px]'], title: '사원_활동_2018.xlsx - Excel', titleCls: 'text-[6.100px] pt-[2px] text-[#8fbca3]', btn: 'w-[14.200px]', faded: true }} />
            <RibbonTabs h="h-[12px]" text="text-[6.400px]" tell="수행할 작업을 알려 주세요." share="w-[33px] pl-[4px]"
              widths={['w-[30px] pr-[3px]', 'w-[19.500px]', 'w-[26px]', 'w-[56.500px]', 'w-[25px]', 'w-[32.500px]', 'w-[25px]', 'w-[27px]']} />
            <TallRibbon editing="icons" w={{ h: 'h-[46px]', clip: 'w-[47px]', font: 'w-[79px]', align: 'w-[55.500px]', num: 'w-[40.500px]', styles: 'w-[54.500px]', cells: 'w-[36px]', combo: 'w-[37px]' }} />
            <FormulaBar h="h-[23px]" bh="h-[14px]" text="text-[7.200px]" cell="A11" value="1723" name="w-[69px]" dots="w-[15px]" mid="w-[54px]" />
            <Grid s={sheet2018} />
            <Footer f={{ h: 'h-[13px]', lead: 'w-[49px] pl-[12px]', nav: 'w-[11px]', active: '실적', activeW: 'w-[25px]', others: ['교육'], otherW: ['w-[23px]'], plus: 'w-[40px]', scroll: 'w-[141px] mr-[9px]', thumb: 'w-[93px]', text: 'text-[6.700px]', sh: 'text-[6.300px]', viewW: 'w-[18px]', zoom: 'w-[9px]', slider: 'w-[47px]', pct: '100 %', tail: 'w-[22px] mr-[9px]' }} />
          </div>
          <Caption c="pl-[19px] pt-[5px] text-[20.600px]">워크북 (사원-활동-2018)</Caption>
        </figure>
      </div>
    </main>
  );
}
